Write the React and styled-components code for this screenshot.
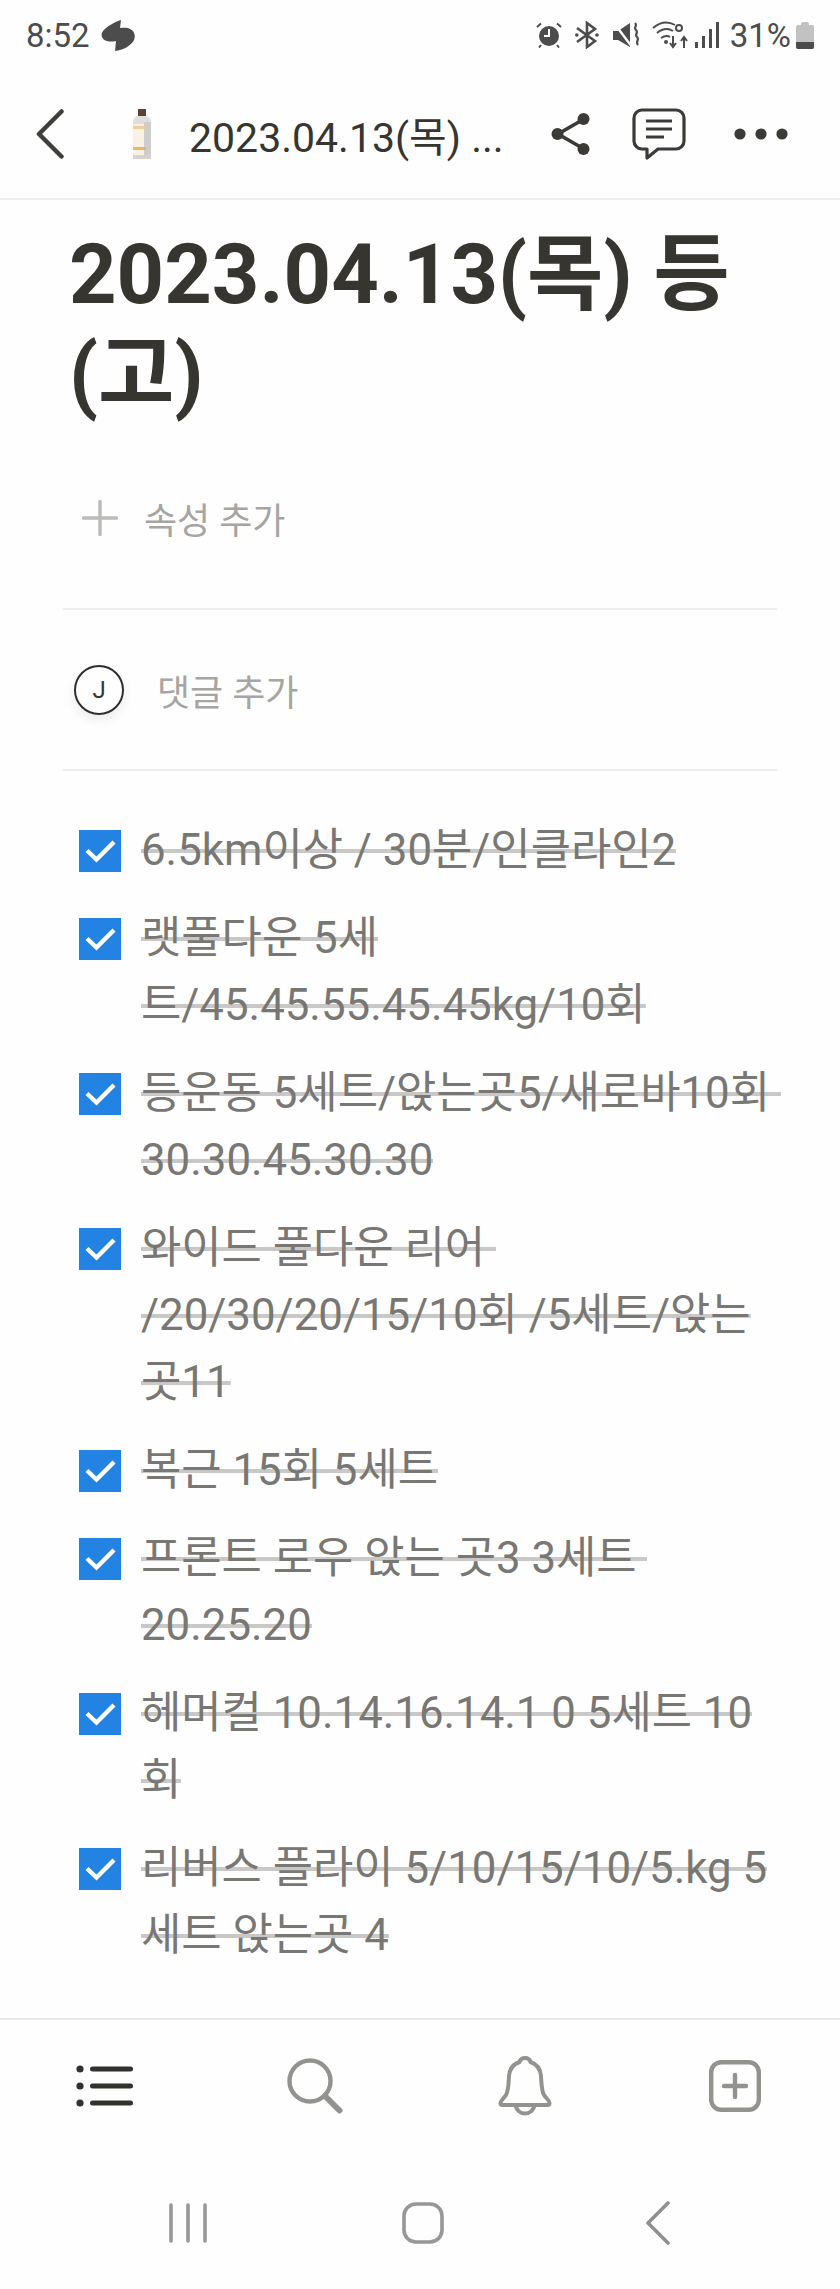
import React from 'react';
import styled, { createGlobalStyle } from 'styled-components';

const GlobalStyle = createGlobalStyle`
  html, body {
    margin: 0;
    padding: 0;
    background: #fefefe;
    font-family: Roboto, "Noto Sans CJK KR", sans-serif;
  }
`;

const tasks = [
  ['6.5km이상 / 30분/인클라인2'],
  ['랫풀다운 5세', '트/45.45.55.45.45kg/10회'],
  ['등운동 5세트/앉는곳5/새로바10회\u00a0', '30.30.45.30.30'],
  ['와이드 풀다운 리어\u00a0', '/20/30/20/15/10회 /5세트/앉는', '곳11'],
  ['복근 15회 5세트'],
  ['프론트 로우 앉는 곳3 3세트\u00a0', '20.25.20'],
  ['헤머컬 10.14.16.14.1 0 5세트 10', '회'],
  ['리버스 플라이 5/10/15/10/5.kg 5', '세트 앉는곳 4'],
];

const Page = styled.div`
  width: 840px;
  height: 2289px;
  display: flex;
  flex-direction: column;
  overflow: hidden;
  background: #fefefe;
`;

const StatusBar = styled.div`
  height: 70px;
  padding: 0 26px 0 26px;
  display: flex;
  align-items: center;
  justify-content: space-between;
  color: #4c4c4c;
  font-size: 33px;
  flex-shrink: 0;
`;

const StatusGroup = styled.div`
  display: flex;
  align-items: center;
`;

const Header = styled.div`
  height: 130px;
  box-sizing: border-box;
  border-bottom: 2px solid #eeeeed;
  padding-left: 36px;
  display: flex;
  align-items: center;
  flex-shrink: 0;
`;

const HeaderTitle = styled.div`
  margin-left: 37px;
  width: 335px;
  font-size: 41px;
  color: #37352f;
  white-space: nowrap;
`;

const HeaderIcons = styled.div`
  margin-left: 27px;
  display: flex;
  align-items: center;
`;

const Main = styled.div`
  flex: 1;
  padding: 25px 63px 0;
`;

const Title = styled.h1`
  margin: 0 0 0 6px;
  font-size: 83px;
  line-height: 100px;
  font-weight: 700;
  color: #37352f;
`;

const AddProperty = styled.div`
  margin: 53px 0 0 19px;
  height: 80px;
  display: flex;
  align-items: center;
  gap: 26px;
  font-size: 36px;
  color: #a6a5a2;
`;

const Divider = styled.div`
  height: 2px;
  background: #eeeeed;
  margin-top: ${(p) => p.$top}px;
`;

const CommentRow = styled.div`
  height: 159px;
  display: flex;
  align-items: center;
  padding-left: 11px;
  font-size: 36px;
  color: #a6a5a2;
`;

const Avatar = styled.div`
  width: 46px;
  height: 46px;
  border: 2px solid #2f2e2b;
  border-radius: 50%;
  display: flex;
  align-items: center;
  justify-content: center;
  font-size: 24px;
  color: #37352f;
  box-shadow: 0 5px 12px rgba(0, 0, 0, 0.08);
  margin-right: 33px;
`;

const CommentText = styled.span`
  margin-top: 1px;
`;

const TaskList = styled.div`
  margin-top: 46px;
  display: flex;
  flex-direction: column;
  gap: 21px;
`;

const Task = styled.div`
  display: flex;
  align-items: flex-start;
  padding-left: 16px;
`;

const Checkbox = styled.div`
  width: 42px;
  height: 42px;
  margin-top: 13px;
  margin-right: 20px;
  background: #2383e2;
  flex-shrink: 0;
  display: flex;
  align-items: center;
  justify-content: center;
`;

const TaskText = styled.div`
  font-size: 43.8px;
  line-height: 67px;
  color: #787773;
`;

const TaskLine = styled.div`
  width: fit-content;
  white-space: nowrap;
  background: linear-gradient(#c9c8c6, #c9c8c6) center / 100% 4px no-repeat;
`;

const TabBar = styled.div`
  height: 134px;
  box-sizing: border-box;
  border-top: 2px solid #e9e9e8;
  display: grid;
  grid-template-columns: repeat(4, 1fr);
  align-items: center;
  justify-items: center;
  flex-shrink: 0;
`;

const NavBar = styled.div`
  height: 137px;
  box-sizing: border-box;
  padding: 5px 64px 0 70px;
  display: grid;
  grid-template-columns: repeat(3, 1fr);
  align-items: center;
  justify-items: center;
  flex-shrink: 0;
`;

const Icon = styled.svg`
  display: block;
  flex-shrink: 0;
  margin: ${(p) => p.$margin || 0};
`;

const Back = () => (
  <Icon width="28" height="50" viewBox="0 0 28 50" fill="none" stroke="#3f3e3a" strokeWidth="4.5" strokeLinecap="round" strokeLinejoin="round">
    <path d="M25.5 2.5 L3 25 L25.5 47.5" />
  </Icon>
);

const Bottle = () => (
  <Icon width="20" height="50" viewBox="0 0 20 50" $margin="0 0 0 68px">
    <rect x="6" y="0" width="8" height="7" fill="#5d4037" />
    <path d="M5 7h10c2 1 4 3 4 6v37H1V13c0-3 2-5 4-6z" fill="#dededc" />
    <path d="M1 15h11v35H1z" fill="#f8f1e4" />
    <path d="M12 13h7v37h-7z" fill="#cdcdcb" />
    <rect x="1" y="17" width="12" height="3" fill="#efcf9c" />
    <rect x="1" y="38" width="13" height="3" fill="#eeb56a" />
    <rect x="1" y="46" width="18" height="4" fill="#d9d2c9" />
  </Icon>
);

const Share = () => (
  <Icon width="40" height="44" viewBox="0 0 40 44" fill="#3b3a36" stroke="#3b3a36" $margin="0 41px 0 0">
    <path d="M33 7 L7 22 L33 37" fill="none" strokeWidth="3.6" />
    <circle cx="32.5" cy="7" r="6" stroke="none" />
    <circle cx="6.5" cy="22" r="6" stroke="none" />
    <circle cx="32.5" cy="37" r="6" stroke="none" />
  </Icon>
);

const Comment = () => (
  <Icon width="54" height="52" viewBox="0 0 54 52" fill="none" stroke="#3b3a36" strokeWidth="3.2" strokeLinecap="round" strokeLinejoin="round" $margin="0 48px 0 0">
    <path d="M10 2h34a8 8 0 0 1 8 8v23a8 8 0 0 1-8 8H26L15 50v-9h-5a8 8 0 0 1-8-8V10a8 8 0 0 1 8-8z" />
    <path d="M14 13h26M14 21h26M14 29h18" strokeLinecap="butt" />
  </Icon>
);

const Dots = () => (
  <Icon width="54" height="12" viewBox="0 0 54 12" fill="#3b3a36">
    <circle cx="6" cy="6" r="5.6" />
    <circle cx="27" cy="6" r="5.6" />
    <circle cx="48" cy="6" r="5.6" />
  </Icon>
);

const Plus = () => (
  <Icon width="36" height="36" viewBox="0 0 36 36" stroke="#bcbbb9" strokeWidth="3.4" strokeLinecap="round">
    <path d="M18 1.5v33M1.5 18h33" />
  </Icon>
);

const Check = () => (
  <svg width="31" height="24" viewBox="0 0 31 24" fill="none" stroke="#fff" strokeWidth="4.4">
    <path d="M2 11.5L11.5 20.5L29 3" />
  </svg>
);

const ListIcon = () => (
  <Icon width="58" height="42" viewBox="0 0 58 42" fill="#32312d">
    <circle cx="4" cy="4" r="3.6" />
    <circle cx="4" cy="21" r="3.6" />
    <circle cx="4" cy="38" r="3.6" />
    <rect x="14" y="1.5" width="43" height="5" rx="2.5" />
    <rect x="14" y="18.5" width="43" height="5" rx="2.5" />
    <rect x="14" y="35.5" width="43" height="5" rx="2.5" />
  </Icon>
);

const SearchIcon = () => (
  <Icon width="56" height="57" viewBox="0 0 56 57" fill="none" stroke="#92928f" strokeLinecap="round">
    <circle cx="23" cy="23" r="20.5" strokeWidth="4.4" />
    <path d="M38 38L52.5 52.5" strokeWidth="6" />
  </Icon>
);

const BellIcon = () => (
  <Icon width="54" height="60" viewBox="0 0 54 60" fill="none" stroke="#92928f" strokeWidth="4" strokeLinejoin="round">
    <path d="M27 2c3 0 5 2 5.500 4 6 2 10 7 10.500 14 .5 8 .5 15 3 19 1.500 2.500 5 5 5.500 8 0 1.500-1 2-2 2H4.500c-1 0-2-.5-2-2 .5-3 4-5.500 5.500-8 2.500-4 2.500-11 3-19 .5-7 4.500-12 10.500-14C22 4 24 2 27 2z" />
    <path d="M17.500 49c.5 5 4.500 8.500 9.500 8.500s9-3.500 9.500-8.500" />
  </Icon>
);

const AddIcon = () => (
  <Icon width="52" height="52" viewBox="0 0 52 52" fill="none" stroke="#92928f" strokeLinecap="round">
    <rect x="2.200" y="2.200" width="47.600" height="47.600" rx="10" strokeWidth="4.400" />
    <path d="M26 15v22M15 26h22" strokeWidth="4.400" />
  </Icon>
);

const RecentsIcon = () => (
  <Icon width="38" height="40" viewBox="0 0 38 40" stroke="#979797" strokeWidth="3.600" strokeLinecap="round">
    <path d="M2 2v36M19 2v36M36 2v36" />
  </Icon>
);

const HomeIcon = () => (
  <Icon width="42" height="42" viewBox="0 0 42 42" fill="none" stroke="#979797" strokeWidth="3.600">
    <rect x="2" y="2" width="38" height="38" rx="12" />
  </Icon>
);

const NavBackIcon = () => (
  <Icon width="24" height="44" viewBox="0 0 24 44" fill="none" stroke="#8f8f8f" strokeWidth="3.600" strokeLinecap="round" strokeLinejoin="round">
    <path d="M22 2L2 22L22 42" />
  </Icon>
);

const CloudGlyph = () => (
  <Icon width="35" height="32" viewBox="0 0 35 32" fill="#4c4c4c" $margin="1px 0 0 11px">
    <path d="M20 0C14 2 6 6 2 11C-1 15 1 20 6 21C9 22 13 21.500 15 21L14 31C22 30 30 26 33 20C35 15 33 10 27 8C25 7.500 21 7.500 19 8z" />
  </Icon>
);

const Alarm = () => (
  <Icon width="26" height="26" viewBox="0 0 26 26" fill="#4c4c4c" $margin="0 13px 0 0">
    <path d="M13 4a10 10 0 1 0 0 20a10 10 0 0 0 0-20zm1 11h-6v-2h4V7h2z" fillRule="evenodd" />
    <path d="M1 5l4-3.500M25 5l-4-3.500M5 23l-2 2.500M21 23l2 2.500" stroke="#4c4c4c" strokeWidth="2" fill="none" />
  </Icon>
);

const Bluetooth = () => (
  <Icon width="24" height="28" viewBox="0 0 24 28" fill="none" stroke="#4c4c4c" strokeWidth="2.600" $margin="0 14px 0 0">
    <path d="M2 7L20 20L12 26V2L20 8L2 21" />
    <circle cx="1.800" cy="14" r="1.800" fill="#4c4c4c" stroke="none" />
    <circle cx="22" cy="14" r="1.800" fill="#4c4c4c" stroke="none" />
  </Icon>
);

const Mute = () => (
  <Icon width="26" height="26" viewBox="0 0 26 26" $margin="0 13px 0 0">
    <path d="M0 9h5l12-8v24L5 18H0z" fill="#4c4c4c" />
    <path d="M1 1l18 24" stroke="#fefefe" strokeWidth="2.400" />
    <path d="M22 1c3 3-2 4 1 7s-2 4 1 7-2 4 1 8" fill="none" stroke="#4c4c4c" strokeWidth="2.200" />
  </Icon>
);

const Wifi = () => (
  <Icon width="36" height="28" viewBox="0 0 36 28" fill="none" stroke="#4c4c4c" strokeWidth="2" $margin="0 7px 0 0">
    <path d="M1 7c7-6 15-7 22-3M5 12c5-4 11-5 16-2M9 17c3-2 6-3 9-1" />
    <circle cx="14" cy="21" r="2" fill="#4c4c4c" stroke="none" />
    <circle cx="27" cy="7" r="3" />
    <path d="M21 15v10M18 22l3 4 3-4M32 27V17M29 20l3-4 3 4" />
  </Icon>
);

const Signal = () => (
  <Icon width="24" height="26" viewBox="0 0 24 26" fill="#4c4c4c" $margin="0 11px 0 0">
    <rect x="0" y="20" width="3" height="6" />
    <rect x="7" y="14" width="3" height="12" />
    <rect x="14" y="7" width="3" height="19" />
    <rect x="21" y="0" width="3" height="26" />
  </Icon>
);

const Battery = () => (
  <Icon width="18" height="27" viewBox="0 0 18 27" $margin="0 0 0 5px">
    <path d="M5 3V2a2 2 0 0 1 2-2h4a2 2 0 0 1 2 2v1h3a2 2 0 0 1 2 2v20a2 2 0 0 1-2 2H2a2 2 0 0 1-2-2V5a2 2 0 0 1 2-2z" fill="#c2c2c2" />
    <path d="M0 20h18v5a2 2 0 0 1-2 2H2a2 2 0 0 1-2-2z" fill="#4c4c4c" />
  </Icon>
);

const App = () => (
  <Page>
    <GlobalStyle />
    <StatusBar>
      <StatusGroup>
        8:52
        <CloudGlyph />
      </StatusGroup>
      <StatusGroup>
        <Alarm />
        <Bluetooth />
        <Mute />
        <Wifi />
        <Signal />
        31%
        <Battery />
      </StatusGroup>
    </StatusBar>
    <Header>
      <Back />
      <Bottle />
      <HeaderTitle>2023.04.13(목) ...</HeaderTitle>
      <HeaderIcons>
        <Share />
        <Comment />
        <Dots />
      </HeaderIcons>
    </Header>
    <Main>
      <Title>2023.04.13(목) 등<br />(고)</Title>
      <AddProperty>
        <Plus />
        속성 추가
      </AddProperty>
      <Divider $top={50} />
      <CommentRow>
        <Avatar>J</Avatar>
        <CommentText>댓글 추가</CommentText>
      </CommentRow>
      <Divider $top={0} />
      <TaskList>
        {tasks.map((lines) => (
          <Task key={lines[0]}>
            <Checkbox><Check /></Checkbox>
            <TaskText>
              {lines.map((line) => (
                <TaskLine key={line}>{line}</TaskLine>
              ))}
            </TaskText>
          </Task>
        ))}
      </TaskList>
    </Main>
    <TabBar>
      <ListIcon />
      <SearchIcon />
      <BellIcon />
      <AddIcon />
    </TabBar>
    <NavBar>
      <RecentsIcon />
      <HomeIcon />
      <NavBackIcon />
    </NavBar>
  </Page>
);

export default App;
